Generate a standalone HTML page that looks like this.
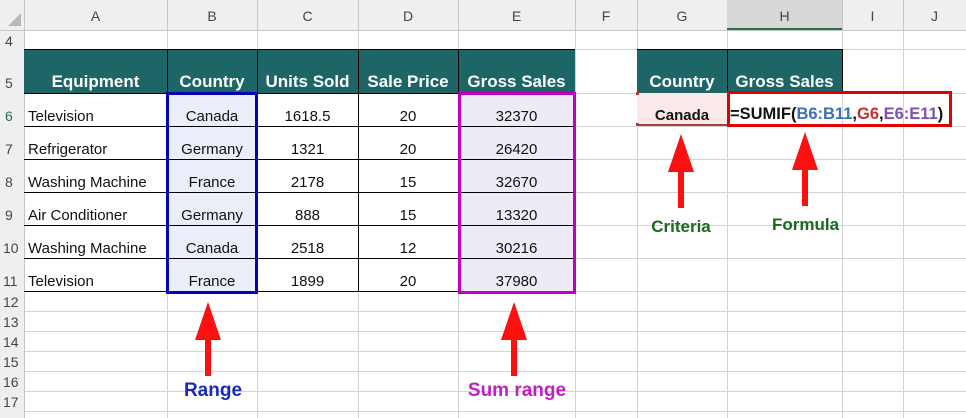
<!DOCTYPE html>
<html><head><meta charset="utf-8"><style>
body{margin:0;width:966px;height:418px;overflow:hidden;background:#fff;font-family:"Liberation Sans",Arial,sans-serif;position:relative}
.t{position:absolute;white-space:nowrap;text-align:center;line-height:1}
.d{font-size:15px;color:#111}
.h{font-size:17px;color:#fff;font-weight:bold}
.rn{font-size:14px;color:#444}
</style></head><body>
<svg width="966" height="418" style="position:absolute;left:0;top:0">
<rect x="0" y="0" width="966" height="30" fill="#efefef"/>
<rect x="0" y="0" width="24" height="418" fill="#efefef"/>
<polygon points="8,26 21,26 21,13" fill="#b8b8b8"/>
<g stroke="#d4d4d4" stroke-width="1">
<line x1="24" y1="49.5" x2="966" y2="49.5"/><line x1="24" y1="93.5" x2="966" y2="93.5"/>
<line x1="24" y1="126.5" x2="966" y2="126.5"/><line x1="24" y1="159.5" x2="966" y2="159.5"/>
<line x1="24" y1="192.5" x2="966" y2="192.5"/><line x1="24" y1="225.5" x2="966" y2="225.5"/>
<line x1="24" y1="258.5" x2="966" y2="258.5"/><line x1="24" y1="291.5" x2="966" y2="291.5"/>
<line x1="24" y1="311.5" x2="966" y2="311.5"/><line x1="24" y1="331.5" x2="966" y2="331.5"/>
<line x1="24" y1="351.5" x2="966" y2="351.5"/><line x1="24" y1="371.5" x2="966" y2="371.5"/>
<line x1="24" y1="391.5" x2="966" y2="391.5"/><line x1="24" y1="411.5" x2="966" y2="411.5"/>
<line x1="167.5" y1="30" x2="167.5" y2="418"/><line x1="257.5" y1="30" x2="257.5" y2="418"/>
<line x1="358.5" y1="30" x2="358.5" y2="418"/><line x1="458.5" y1="30" x2="458.5" y2="418"/>
<line x1="575.5" y1="30" x2="575.5" y2="418"/><line x1="637.5" y1="30" x2="637.5" y2="418"/>
<line x1="727.5" y1="30" x2="727.5" y2="418"/><line x1="842.5" y1="30" x2="842.5" y2="418"/>
<line x1="903.5" y1="30" x2="903.5" y2="418"/>
</g>
<g stroke="#c6c6c6" stroke-width="1">
<line x1="0" y1="30.5" x2="966" y2="30.5"/><line x1="24.5" y1="0" x2="24.5" y2="418"/>
<line x1="167.5" y1="0" x2="167.5" y2="30"/><line x1="257.5" y1="0" x2="257.5" y2="30"/>
<line x1="358.5" y1="0" x2="358.5" y2="30"/><line x1="458.5" y1="0" x2="458.5" y2="30"/>
<line x1="575.5" y1="0" x2="575.5" y2="30"/><line x1="637.5" y1="0" x2="637.5" y2="30"/>
<line x1="727.5" y1="0" x2="727.5" y2="30"/><line x1="842.5" y1="0" x2="842.5" y2="30"/>
<line x1="903.5" y1="0" x2="903.5" y2="30"/>
</g>
<rect x="727" y="0" width="115" height="30" fill="#d8d8d8"/>
<line x1="727" y1="29" x2="842" y2="29" stroke="#217346" stroke-width="2"/>
<rect x="24" y="49" width="551" height="44" fill="#1d6566"/>
<rect x="637" y="49" width="205" height="44" fill="#1d6566"/>
<rect x="167" y="93" width="90" height="198" fill="#e9eef8"/>
<rect x="458" y="93" width="117" height="198" fill="#efebf6"/>
<rect x="637" y="93" width="90" height="33" fill="#fbe8e8"/>
<g stroke="#000" stroke-width="1">
<line x1="24" y1="49.5" x2="575" y2="49.5"/><line x1="637" y1="49.5" x2="842" y2="49.5"/>
<line x1="24" y1="126.5" x2="575" y2="126.5"/><line x1="24" y1="159.5" x2="575" y2="159.5"/>
<line x1="24" y1="192.5" x2="575" y2="192.5"/><line x1="24" y1="225.5" x2="575" y2="225.5"/>
<line x1="24" y1="258.5" x2="575" y2="258.5"/><line x1="24" y1="291.5" x2="575" y2="291.5"/>
<line x1="24" y1="93.5" x2="575" y2="93.5"/>
<line x1="167.5" y1="49" x2="167.5" y2="291"/><line x1="257.5" y1="49" x2="257.5" y2="291"/>
<line x1="358.5" y1="49" x2="358.5" y2="291"/><line x1="458.5" y1="49" x2="458.5" y2="291"/>
<line x1="727.5" y1="49" x2="727.5" y2="93"/><line x1="842.5" y1="49" x2="842.5" y2="93"/>
</g>
<line x1="637" y1="125" x2="727" y2="125" stroke="#a04040" stroke-width="2"/>
<rect x="636" y="92" width="3" height="3" fill="#a04040"/><rect x="636" y="123" width="3" height="3" fill="#a04040"/>
<rect x="167.5" y="93.5" width="89" height="199" fill="none" stroke="#0000bb" stroke-width="3"/>
<rect x="459.5" y="93.5" width="115" height="199" fill="none" stroke="#c000c0" stroke-width="3"/>
<rect x="728.5" y="92.5" width="222" height="33" fill="none" stroke="#e00000" stroke-width="3"/>
<g fill="#ff1010">
<polygon points="208,302 195,340 221,340"/><rect x="205" y="338" width="6" height="38"/>
<polygon points="514,302 501,340 527,340"/><rect x="511" y="338" width="6" height="38"/>
<polygon points="681,134 668,172 694,172"/><rect x="678" y="170" width="6" height="38"/>
<polygon points="805,132 792,170 818,170"/><rect x="802" y="168" width="6" height="38"/>
</g>
</svg>
<div class="t rn" style="left:24px;width:143px;top:9px">A</div>
<div class="t rn" style="left:167px;width:90px;top:9px">B</div>
<div class="t rn" style="left:257px;width:101px;top:9px">C</div>
<div class="t rn" style="left:358px;width:100px;top:9px">D</div>
<div class="t rn" style="left:458px;width:117px;top:9px">E</div>
<div class="t rn" style="left:575px;width:62px;top:9px">F</div>
<div class="t rn" style="left:637px;width:90px;top:9px">G</div>
<div class="t rn" style="left:727px;width:115px;top:9px">H</div>
<div class="t rn" style="left:842px;width:61px;top:9px">I</div>
<div class="t rn" style="left:903px;width:63px;top:9px">J</div>
<div class="t rn" style="left:0;top:34px;padding-left:5px">4</div>
<div class="t rn" style="left:0;top:76px;padding-left:5px">5</div>
<div class="t rn" style="left:0;top:109px;padding-left:5px;color:#217346">6</div>
<div class="t rn" style="left:0;top:142px;padding-left:5px">7</div>
<div class="t rn" style="left:0;top:175px;padding-left:5px">8</div>
<div class="t rn" style="left:0;top:208px;padding-left:5px">9</div>
<div class="t rn" style="left:0;top:241px;padding-left:3px">10</div>
<div class="t rn" style="left:0;top:274px;padding-left:3px">11</div>
<div class="t rn" style="left:0;top:295px;padding-left:3px">12</div>
<div class="t rn" style="left:0;top:315px;padding-left:3px">13</div>
<div class="t rn" style="left:0;top:335px;padding-left:3px">14</div>
<div class="t rn" style="left:0;top:355px;padding-left:3px">15</div>
<div class="t rn" style="left:0;top:375px;padding-left:3px">16</div>
<div class="t rn" style="left:0;top:395px;padding-left:3px">17</div>
<div class="t h" style="left:24px;width:143px;top:73px">Equipment</div>
<div class="t h" style="left:167px;width:90px;top:73px">Country</div>
<div class="t h" style="left:257px;width:101px;top:73px">Units Sold</div>
<div class="t h" style="left:358px;width:100px;top:73px">Sale Price</div>
<div class="t h" style="left:458px;width:117px;top:73px">Gross Sales</div>
<div class="t h" style="left:637px;width:90px;top:73px">Country</div>
<div class="t h" style="left:727px;width:115px;top:73px">Gross Sales</div>
<div style="position:absolute;left:0;top:109px">
<div class="t d" style="left:28px;top:0;text-align:left">Television</div>
<div class="t d" style="left:167px;width:90px;top:0">Canada</div>
<div class="t d" style="left:257px;width:101px;top:0">1618.5</div>
<div class="t d" style="left:358px;width:100px;top:0">20</div>
<div class="t d" style="left:458px;width:117px;top:0">32370</div>
<div class="t d" style="left:28px;top:33px;text-align:left">Refrigerator</div>
<div class="t d" style="left:167px;width:90px;top:33px">Germany</div>
<div class="t d" style="left:257px;width:101px;top:33px">1321</div>
<div class="t d" style="left:358px;width:100px;top:33px">20</div>
<div class="t d" style="left:458px;width:117px;top:33px">26420</div>
<div class="t d" style="left:28px;top:66px;text-align:left">Washing Machine</div>
<div class="t d" style="left:167px;width:90px;top:66px">France</div>
<div class="t d" style="left:257px;width:101px;top:66px">2178</div>
<div class="t d" style="left:358px;width:100px;top:66px">15</div>
<div class="t d" style="left:458px;width:117px;top:66px">32670</div>
<div class="t d" style="left:28px;top:99px;text-align:left">Air Conditioner</div>
<div class="t d" style="left:167px;width:90px;top:99px">Germany</div>
<div class="t d" style="left:257px;width:101px;top:99px">888</div>
<div class="t d" style="left:358px;width:100px;top:99px">15</div>
<div class="t d" style="left:458px;width:117px;top:99px">13320</div>
<div class="t d" style="left:28px;top:132px;text-align:left">Washing Machine</div>
<div class="t d" style="left:167px;width:90px;top:132px">Canada</div>
<div class="t d" style="left:257px;width:101px;top:132px">2518</div>
<div class="t d" style="left:358px;width:100px;top:132px">12</div>
<div class="t d" style="left:458px;width:117px;top:132px">30216</div>
<div class="t d" style="left:28px;top:165px;text-align:left">Television</div>
<div class="t d" style="left:167px;width:90px;top:165px">France</div>
<div class="t d" style="left:257px;width:101px;top:165px">1899</div>
<div class="t d" style="left:358px;width:100px;top:165px">20</div>
<div class="t d" style="left:458px;width:117px;top:165px">37980</div>
</div>
<div class="t d" style="left:637px;width:90px;top:108px;font-weight:bold">Canada</div>
<div class="t" style="left:730px;top:106px;font-size:16.5px;font-weight:bold;color:#111">=SUMIF(<span style="color:#3a6fc0">B6:B11</span>,<span style="color:#c03030">G6</span>,<span style="color:#8050b0">E6:E11</span>)</div>
<div class="t" style="left:168px;width:90px;top:381px;font-size:19px;font-weight:bold;color:#1a2ac0">Range</div>
<div class="t" style="left:454px;width:126px;top:381px;font-size:19px;font-weight:bold;color:#c020c0">Sum range</div>
<div class="t" style="left:636px;width:90px;top:218px;font-size:17px;font-weight:bold;color:#1b6a1b">Criteria</div>
<div class="t" style="left:748px;width:115px;top:216px;font-size:17px;font-weight:bold;color:#1b6a1b">Formula</div>
</body></html>
